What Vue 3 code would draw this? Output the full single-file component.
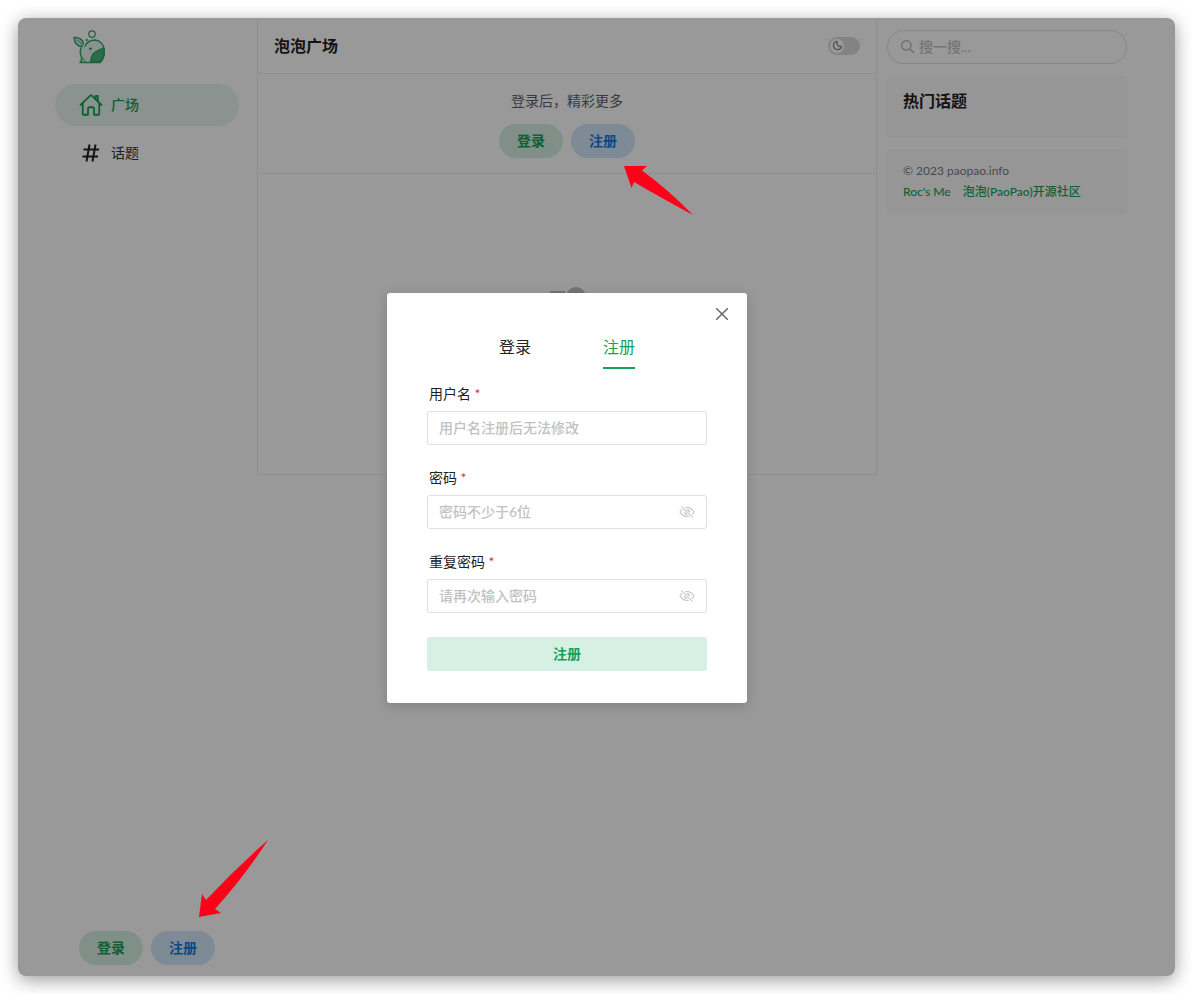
<template>
    <div class="window">
        <div class="layout">
            <aside class="sidebar">
                <a class="logo" href="#" aria-label="PaoPao">
                    <svg viewBox="0 0 64 68" width="32" height="34" fill="none" stroke="#2fa56c" stroke-width="3" stroke-linecap="round" stroke-linejoin="round">
                        <circle cx="38" cy="8" r="6.500" stroke-width="2.500" />
                        <circle cx="27" cy="20" r="1.500" stroke-width="2" />
                        <path d="M19 33C9 34 3 26 2 15c10-1 18 4 19 13" fill="#2fa56c" fill-opacity=".2" />
                        <path d="M8 20c4 2 7 5 10 10" stroke-width="2" />
                        <path d="M24 32c4-8 11-12 20-12 11 1 18 9 18 20v10c-1 6-4 10-8 15H14c4-3 4-7 3-11-3-6-3-12-1-18" fill="#2fa56c" fill-opacity=".12" />
                        <path d="M20 57c1 4 3 5 6 7" stroke-width="2" />
                        <path d="M34 38l2-1" stroke-width="4" />
                        <path d="M36 65c-1-6 0-10 3-15 6-9 13-9 23-14 2 12-1 22-8 29-2-3-4-3-6 0-3-3-7-3-12 0z" fill="#18a058" fill-opacity=".75" />
                    </svg>
                </a>
                <nav class="menu">
                    <a v-for="item in menus" :key="item.name" href="#" class="menu-item" :class="{ active: item.active }">
                        <svg v-if="item.icon === 'home'" viewBox="0 0 512 512" width="24" height="24" fill="none" stroke="currentColor" stroke-width="38" stroke-linecap="round" stroke-linejoin="round">
                            <path d="M80 212v236a16 16 0 0016 16h96V328a24 24 0 0124-24h80a24 24 0 0124 24v136h96a16 16 0 0016-16V212" />
                            <path d="M480 256L266.89 52c-5-5.28-16.69-5.34-21.78 0L32 256" />
                            <path d="M400 179V64h-48v69" />
                        </svg>
                        <svg v-else viewBox="0 0 24 24" width="24" height="24" fill="none" stroke="currentColor" stroke-width="2">
                            <path d="M4.500 8.500h15.500M3.500 15.500h15.500M10.500 3.500l-3 17M16.500 3.500l-3 17" />
                        </svg>
                        <span>{{ item.name }}</span>
                    </a>
                </nav>
                <div class="buttons sidebar-buttons">
                    <button class="btn primary" @click="open('login')">登录</button>
                    <button class="btn info" @click="open('register')">注册</button>
                </div>
            </aside>

            <main class="main">
                <header class="main-header">
                    <h1>泡泡广场</h1>
                    <label class="switch">
                        <input v-model="dark" type="checkbox" aria-label="夜间模式" />
                        <span class="knob">
                            <svg viewBox="0 0 24 24" width="11" height="11" fill="none" stroke="currentColor" stroke-width="3" stroke-linejoin="round">
                                <path d="M11 3a9 9 0 1 0 10 11c-7 1-12-3-10-11z" />
                            </svg>
                        </span>
                    </label>
                </header>
                <section class="welcome">
                    <p>登录后，精彩更多</p>
                    <div class="buttons">
                        <button class="btn primary" @click="open('login')">登录</button>
                        <button class="btn info" @click="open('register')">注册</button>
                    </div>
                </section>
                <section class="empty">
                    <svg viewBox="0 0 40 40" width="40" height="40" fill="#c2c2c2">
                        <circle cx="29" cy="10" r="10" />
                        <path d="M3 4h15v3H6v22h25V23h3v12H3z" />
                        <path d="M25 6l8 8M33 6l-8 8" stroke="#fff" stroke-width="2" />
                    </svg>
                </section>
            </main>

            <aside class="right">
                <label class="search">
                    <svg viewBox="0 0 24 24" width="16" height="16" fill="none" stroke="currentColor" stroke-width="2.500" stroke-linecap="round">
                        <circle cx="9.500" cy="9.500" r="7" />
                        <path d="M14.500 14.500l6 6" />
                    </svg>
                    <input type="text" placeholder="搜一搜..." aria-label="搜一搜" />
                </label>
                <section class="card topics">
                    <h2>热门话题</h2>
                </section>
                <section class="card copyright">
                    <p>© 2023 paopao.info</p>
                    <div class="links">
                        <a href="#">Roc's Me</a>
                        <a href="#">泡泡(PaoPao)开源社区</a>
                    </div>
                </section>
            </aside>
        </div>

        <div v-if="visible" class="mask">
            <div class="modal" role="dialog" aria-label="注册">
                <button class="close" aria-label="关闭" @click="visible = false">
                    <svg viewBox="0 0 12 12" width="12" height="12" fill="none" stroke="currentColor" stroke-width="1.500" stroke-linecap="round">
                        <path d="M.7.7l10.600 10.600M11.300.7L.7 11.300" />
                    </svg>
                </button>
                <div class="tabs" role="tablist">
                    <button
                        v-for="t in tabs"
                        :key="t.key"
                        role="tab"
                        class="tab"
                        :class="{ active: tab === t.key }"
                        :aria-selected="tab === t.key"
                        @click="tab = t.key"
                    >
                        {{ t.label }}
                    </button>
                </div>
                <form @submit.prevent>
                    <div v-for="field in fields" :key="field.id" class="form-item">
                        <label :for="field.id">{{ field.label }} <span class="required">*</span></label>
                        <div class="input-wrapper">
                            <input :id="field.id" v-model="form[field.id]" :type="field.type" :placeholder="field.placeholder" />
                            <svg v-if="field.type === 'password'" class="eye" viewBox="0 0 512 512" width="16" height="16" fill="currentColor">
                                <path d="M432 448a15.920 15.920 0 01-11.310-4.690l-352-352a16 16 0 0122.620-22.620l352 352A16 16 0 01432 448z" />
                                <path d="M255.660 384c-41.490 0-81.500-12.280-118.920-36.500c-34.070-22-64.740-53.510-88.700-91v-.08c19.940-28.570 41.780-52.730 65.240-72.210a2 2 0 00.14-2.940L93.500 161.380a2 2 0 00-2.710-.12c-24.920 21-48.050 46.760-69.080 76.920a31.920 31.920 0 00-.64 35.540c26.410 41.330 60.400 76.140 98.280 100.650C162 402 207.900 416 255.660 416a239.130 239.130 0 0075.800-12.580a2 2 0 00.77-3.310l-21.580-21.580a4 4 0 00-3.830-1a204.800 204.800 0 01-51.160 6.470z" />
                                <path d="M490.840 238.600c-26.460-40.920-60.790-75.680-99.270-100.530C349 110.550 302 96 255.660 96a227.340 227.340 0 00-74.890 12.830a2 2 0 00-.75 3.310l21.550 21.550a4 4 0 003.880 1a192.820 192.820 0 0150.210-6.690c40.690 0 80.580 12.430 118.550 37c34.710 22.400 65.740 53.880 89.760 91a.13.13 0 010 .16a310.720 310.720 0 01-64.120 72.730a2 2 0 00-.15 2.950l19.900 19.890a2 2 0 002.700.13a343.490 343.490 0 0068.640-78.480a32.200 32.200 0 00-.1-34.780z" />
                                <path d="M256 160a95.880 95.880 0 00-21.370 2.400a2 2 0 00-1 3.380l112.590 112.560a2 2 0 003.380-1A96 96 0 00256 160z" />
                                <path d="M165.780 233.660a2 2 0 00-3.380 1a96 96 0 00115 115a2 2 0 001-3.380z" />
                            </svg>
                        </div>
                    </div>
                    <button type="submit" class="submit">注册</button>
                </form>
            </div>
        </div>

        <svg class="arrow arrow-top" viewBox="0 0 70 50" width="70" height="50" fill="#ff0019">
            <path d="M0 0h23l-5 4.500q25 18 51 44.500-28-15-59-33l-2.500 6z" />
        </svg>
        <svg class="arrow arrow-bottom" viewBox="0 0 70 78" width="70" height="78" fill="#ff0019">
            <path d="M69 0Q37 28 7 60l-4-6-3 23 22-4-6-4Q45 37 69 0z" />
        </svg>
    </div>
</template>

<script setup>
import { reactive, ref } from 'vue'

const visible = ref(true)
const dark = ref(false)
const tab = ref('register')

const menus = [
    { name: '广场', icon: 'home', active: true },
    { name: '话题', icon: 'hash', active: false }
]

const tabs = [
    { key: 'login', label: '登录' },
    { key: 'register', label: '注册' }
]

const fields = [
    { id: 'username', label: '用户名', type: 'text', placeholder: '用户名注册后无法修改' },
    { id: 'password', label: '密码', type: 'password', placeholder: '密码不少于6位' },
    { id: 'repassword', label: '重复密码', type: 'password', placeholder: '请再次输入密码' }
]

const form = reactive({
    username: '',
    password: '',
    repassword: ''
})

const open = (key) => {
    tab.value = key
    visible.value = true
}
</script>

<style>
body {
    background: #fff;
}
</style>

<style scoped>
* {
    box-sizing: border-box;
}

.window {
    position: relative;
    display: flex;
    min-height: calc(100vh - 36px);
    margin: 18px;
    border-radius: 8px;
    background: #fff;
    box-shadow: 0 4px 18px rgba(0, 0, 0, 0.4);
    font-family: Lato, "Noto Sans CJK SC", sans-serif;
    font-size: 14px;
    line-height: 20px;
    color: #333639;
}

h1,
h2,
p {
    margin: 0;
}

h1,
h2 {
    font-size: 16px;
    font-weight: 700;
    line-height: 24px;
    color: #1f2225;
}

a {
    color: #18a058;
    text-decoration: none;
}

button,
input {
    font-family: inherit;
    font-size: 14px;
}

button {
    padding: 0;
    border: none;
    background: none;
    cursor: pointer;
}

svg {
    display: block;
    flex-shrink: 0;
}

.layout {
    display: flex;
    flex: 1;
    gap: 10px;
    max-width: 1157px;
    margin: 0 auto;
    padding: 0 48px 0 29px;
}

/* Left column */
.sidebar {
    display: flex;
    flex-direction: column;
    width: 200px;
    padding: 12px 8px 11px;
}

.logo {
    align-self: flex-start;
    margin-left: 18px;
}

.menu {
    display: flex;
    flex-direction: column;
    gap: 6px;
    margin-top: 20px;
}

.menu-item {
    display: flex;
    align-items: center;
    gap: 8px;
    height: 42px;
    padding-left: 24px;
    border-radius: 21px;
    color: #333639;
}

.menu-item svg {
    color: #1f2225;
}

.menu-item.active {
    background: #e7f5ee;
}

.menu-item.active,
.menu-item.active svg {
    color: #18a058;
}

.menu-item.active span {
    font-weight: 500;
}

.buttons {
    display: flex;
    gap: 8px;
}

.sidebar-buttons {
    margin-top: auto;
    margin-left: 24px;
}

.btn,
.submit {
    height: 34px;
    padding-bottom: 2px;
    font-weight: 700;
}

.btn {
    width: 64px;
    border-radius: 17px;
}

.btn.primary {
    background: #d6f0e4;
    color: #18a058;
}

.btn.info {
    background: #d2e6f8;
    color: #1478dc;
}

/* Middle column */
.main {
    flex: 1;
    align-self: flex-start;
    border: 1px solid #efeff5;
    border-top: none;
}

.main-header {
    display: flex;
    align-items: center;
    justify-content: space-between;
    height: 56px;
    padding: 0 16px;
    border-bottom: 1px solid #efeff5;
}

.switch {
    position: relative;
    display: block;
    width: 32px;
    height: 18px;
}

.switch input {
    display: block;
    width: 32px;
    height: 18px;
    margin: 0;
    border-radius: 9px;
    appearance: none;
    background: #dbdbdb;
}

.knob {
    position: absolute;
    top: 2px;
    left: 2px;
    display: flex;
    align-items: center;
    justify-content: center;
    width: 14px;
    height: 14px;
    border-radius: 50%;
    background: #fff;
    color: #8c9196;
}

.switch input:checked + .knob {
    left: 16px;
}

.welcome {
    display: flex;
    flex-direction: column;
    align-items: center;
    gap: 13px;
    height: 100px;
    padding-top: 17px;
    border-bottom: 1px solid #efeff5;
    color: #606266;
}

.empty {
    display: flex;
    justify-content: center;
    height: 300px;
    padding-top: 113px;
}

/* Right column */
.right {
    width: 240px;
    padding-top: 12px;
}

.search {
    display: flex;
    align-items: center;
    gap: 3px;
    height: 34px;
    padding: 0 12px;
    border: 1px solid #e0e0e6;
    border-radius: 17px;
    color: #c2c2c2;
}

.search input {
    flex: 1;
    min-width: 0;
    padding: 0;
    border: none;
    outline: none;
    background: none;
}

input::placeholder {
    color: #c2c2c2;
    font-weight: 500;
    opacity: 1;
}

.card {
    border-radius: 2px;
    background: #fafafc;
}

.topics {
    height: 62px;
    margin-top: 12px;
    padding: 13px 16px;
}

.copyright {
    margin-top: 11px;
    padding: 11px 16px;
    font-size: 12px;
    line-height: 21px;
    color: #767c82;
}

.links {
    display: flex;
    gap: 12px;
    font-weight: 500;
}

/* Dialog */
.mask {
    position: absolute;
    top: 0;
    right: 0;
    bottom: 0;
    left: 0;
    display: flex;
    align-items: center;
    justify-content: center;
    padding-top: 2px;
    padding-right: 59px;
    border-radius: 8px;
    background: rgba(0, 0, 0, 0.4);
}

.modal {
    position: relative;
    width: 360px;
    padding: 40px 40px 32px;
    border-radius: 3px;
    background: #fff;
    box-shadow: 0 3px 12px rgba(0, 0, 0, 0.16);
}

.close {
    position: absolute;
    top: 10px;
    right: 14px;
    display: flex;
    align-items: center;
    justify-content: center;
    width: 22px;
    height: 22px;
    color: #666;
}

.tabs {
    display: flex;
    justify-content: center;
    gap: 72px;
    margin-bottom: 16px;
}

.tab {
    padding-bottom: 6px;
    border-bottom: 2px solid transparent;
    font-size: 16px;
    line-height: 28px;
    color: #1f2225;
}

.tab.active {
    border-color: #18a058;
    color: #18a058;
}

.form-item {
    margin-bottom: 24px;
}

.form-item label {
    display: block;
    height: 26px;
    padding-left: 2px;
    line-height: 18px;
    color: #1f2225;
}

.required {
    color: #d03050;
}

.input-wrapper {
    display: flex;
    align-items: center;
    height: 34px;
    padding: 0 11px;
    border: 1px solid #e0e0e6;
    border-radius: 3px;
}

.input-wrapper:focus-within {
    border-color: #18a058;
}

.input-wrapper input,
.search input {
    height: 32px;
    padding-bottom: 2px;
}

.input-wrapper input {
    flex: 1;
    min-width: 0;
    border: none;
    outline: none;
    padding-top: 0;
    padding-right: 0;
    padding-left: 0;
}

.eye {
    color: #c2c2c2;
}

.submit {
    display: block;
    width: 100%;
    border-radius: 3px;
    background: #d6f0e4;
    color: #18a058;
}

/* Pointers to the register buttons */
.arrow {
    position: absolute;
}

.arrow-top {
    top: 148px;
    left: 606px;
}

.arrow-bottom {
    bottom: 58px;
    left: 181px;
}
</style>
